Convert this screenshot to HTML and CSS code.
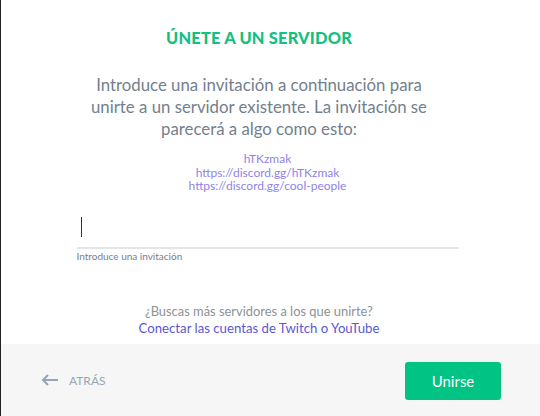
FILE: index.html
```html
<!DOCTYPE html>
<html lang="es">
<head>
<meta charset="utf-8">
<link rel="stylesheet" href="styles.css">
</head>
<body>
<div class="modal">
  <div class="content">
    <h1 class="title">Únete a un servidor</h1>
    <p class="intro">Introduce una invitación a continuación para unirte a un servidor existente. La invitación se parecerá a algo como esto:</p>
    <div class="examples">
      <div>hTKzmak</div>
      <div>https://discord.gg/hTKzmak</div>
      <div>https://discord.gg/cool-people</div>
    </div>
    <div class="field">
      <div class="input"><span class="caret"></span></div>
      <div class="label">Introduce una invitación</div>
    </div>
    <div class="more">
      <div class="more-q">¿Buscas más servidores a los que unirte?</div>
      <a class="more-link">Conectar las cuentas de Twitch o YouTube</a>
    </div>
  </div>
  <div class="footer">
    <div class="back">
      <svg width="18" height="12" viewBox="0 0 18 12"><path d="M17 6H2M7 1L2 6l5 5" fill="none" stroke="#99a5b3" stroke-width="2"/></svg>
      <span>ATRÁS</span>
    </div>
    <button class="join">Unirse</button>
  </div>
</div>
</body>
</html>
```
FILE: styles.css
```css
html, body { margin: 0; padding: 0; }
body { width: 540px; height: 416px; overflow: hidden; background: #fff; font-family: "Lato", "Noto Sans", sans-serif; }
.modal { width: 539px; height: 416px; border-left: 1px solid #202225; display: flex; flex-direction: column; }
.content { height: 344px; display: flex; flex-direction: column; align-items: center; box-sizing: border-box; padding-top: 28px; }
.title { margin: 0 23px 0 0; font-size: 16.4px; font-weight: 900; color: #13c07f; text-transform: uppercase; line-height: 20px; letter-spacing: 0.2px; }
.intro { margin: 26px 23px 0 0; width: 360px; text-align: center; font-size: 16.8px; line-height: 22px; color: #737f8d; }
.examples { margin: 12px 6px 0 0; text-align: center; font-size: 12px; line-height: 13.5px; color: #8f84e6; }
.field { margin: 22px 6px 0 0; width: 382px; }
.input { height: 32px; border-bottom: 2px solid #e3e5e8; display: flex; align-items: center; padding-left: 4px; }
.caret { width: 1px; height: 20px; background: #2e3338; margin-top: -8px; }
.label { margin-top: 1px; font-size: 10px; color: #747f8d; line-height: 13px; }
.more { margin: 40px 23px 0 0; text-align: center; }
.more-q { display: block; color: #8e9297; font-size: 12.9px; line-height: 17px; }
.more-link { display: block; color: #5b57d6; font-size: 13.2px; line-height: 17px; }
.footer { flex: 1; background: #f6f6f7; display: flex; align-items: center; justify-content: space-between; padding: 0 39px 0 40px; }
.back { display: flex; align-items: center; gap: 10px; color: #99a5b3; font-size: 12px; }
.join { width: 96px; height: 38px; border: none; border-radius: 3px; background: #00c384; color: #fff; font-family: inherit; font-size: 15px; margin-top: 2px; }
```
